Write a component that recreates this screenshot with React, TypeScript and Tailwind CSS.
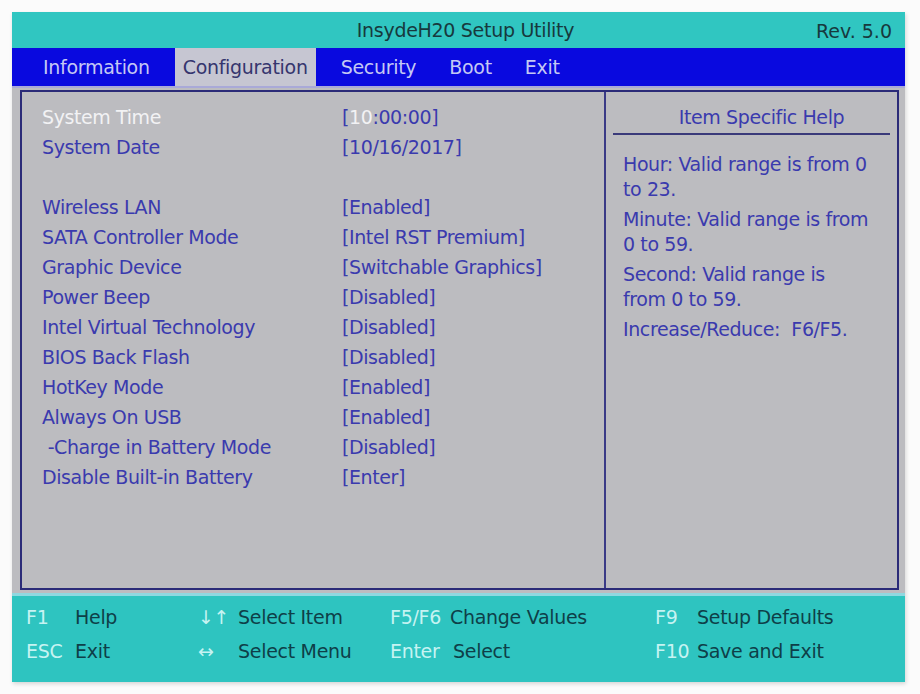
const font = { fontFamily: '"DejaVu Sans", "Liberation Sans", sans-serif' }

const rows: { label: string; value: string; gap?: boolean }[] = [
  { label: 'System Date', value: '[10/16/2017]' },
  { label: 'Wireless LAN', value: '[Enabled]', gap: true },
  { label: 'SATA Controller Mode', value: '[Intel RST Premium]' },
  { label: 'Graphic Device', value: '[Switchable Graphics]' },
  { label: 'Power Beep', value: '[Disabled]' },
  { label: 'Intel Virtual Technology', value: '[Disabled]' },
  { label: 'BIOS Back Flash', value: '[Disabled]' },
  { label: 'HotKey Mode', value: '[Enabled]' },
  { label: 'Always On USB', value: '[Enabled]' },
  { label: '\u00a0-Charge in Battery Mode', value: '[Disabled]' },
  { label: 'Disable Built-in Battery', value: '[Enter]' },
]

const menu = ['Information', 'Configuration', 'Security', 'Boot', 'Exit']

function Key({ k, label, w }: { k: string; label: string; w: string }) {
  return (
    <div className="flex items-center">
      <span className={`${w} text-[#c6f3f2]`}>{k}</span>
      <span className="text-[#0e3f48]">{label}</span>
    </div>
  )
}

export default function App() {
  return (
    <div className="w-[920px] h-[694px] bg-[#fbfbfb] pt-[12px] pl-[12px] overflow-hidden" style={font}>
      <div className="w-[893px] h-[670px] flex flex-col shadow-[1px_2px_4px_rgba(0,0,0,0.15)]">
        {/* Title */}
        <div className="h-[36px] bg-[#30c6c1] flex items-center relative text-[19px] text-[#17393d]">
          <span className="mx-auto pl-[14px] tracking-[-0.3px]">InsydeH20 Setup Utility</span>
          <span className="absolute right-[13px] top-[5px]">Rev. 5.0</span>
        </div>

        {/* Menu */}
        <div className="h-[38px] bg-[#0909df] flex items-stretch pl-[23px] gap-[17px] text-[19px] tracking-[-0.3px]">
          {menu.map((m) => (
            <div
              key={m}
              className={
                m === 'Configuration'
                  ? 'px-[8px] flex items-center bg-[#c6c6d2] text-[#35356e]'
                  : 'px-[8px] flex items-center text-[#c4c8f4]'
              }
            >
              {m}
            </div>
          ))}
        </div>

        {/* Body */}
        <div className="h-[507px] bg-[#bcbcc0] border-t-[2px] border-[#a9a9d8] pt-[2px] pl-[8px] pr-[6px] pb-[3px]">
          <div className="h-full border-2 border-[#2b2b78] flex">
            <div className="w-[584px] border-r-2 border-[#3a3a86] pl-[20px] pt-[10px] text-[19px] text-[#3a3aae] tracking-[-0.4px]">
              <div className="flex h-[30px] items-center">
                <span className="w-[300px] text-[#f2f2f4]">System Time</span>
                <span>
                  [<span className="text-[#f2f2f4]">10</span>:00:00]
                </span>
              </div>
              {rows.map((r) => (
                <div key={r.label} className={`flex h-[30px] items-center ${r.gap ? 'mt-[30px]' : ''}`}>
                  <span className="w-[300px] whitespace-pre">{r.label}</span>
                  <span>{r.value}</span>
                </div>
              ))}
            </div>
            <div className="flex-1 pt-[10px] px-[6px] text-[19px] text-[#3a3aae] tracking-[-0.4px]">
              <div className="h-[30px] flex items-center justify-center pl-[20px]">Item Specific Help</div>
              <div className="h-[2px] bg-[#3a3a7a] mt-[1px] mx-[1px]" />
              <div className="pl-[11px] pt-[17px] leading-[25px] flex flex-col gap-[5px]">
                <p>Hour: Valid range is from 0<br />to 23.</p>
                <p>Minute: Valid range is from<br />0 to 59.</p>
                <p>Second: Valid range is<br />from 0 to 59.</p>
                <p>Increase/Reduce:&nbsp; F6/F5.</p>
              </div>
            </div>
          </div>
        </div>

        {/* Footer */}
        <div className="flex-1 bg-[#2ec4c0] border-t-[3px] border-[#8fd8e0] pl-[14px] pt-[4px] text-[19px] tracking-[-0.3px]">
          <div className="grid grid-cols-[172px_192px_265px_200px] grid-rows-[34px_34px]">
            <Key k="F1" label="Help" w="w-[49px]" />
            <Key k="↓↑" label="Select  Item" w="w-[40px]" />
            <Key k="F5/F6" label="Change Values" w="w-[60px]" />
            <Key k="F9" label="Setup Defaults" w="w-[42px]" />
            <Key k="ESC" label="Exit" w="w-[49px]" />
            <Key k="↔" label="Select  Menu" w="w-[40px]" />
            <Key k="Enter" label="Select" w="w-[63px]" />
            <Key k="F10" label="Save and Exit" w="w-[42px]" />
          </div>
        </div>
      </div>
    </div>
  )
}
